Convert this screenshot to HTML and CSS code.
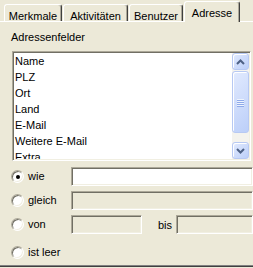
FILE: index.html
```html
<!DOCTYPE html>
<html lang="de">
<head>
<meta charset="UTF-8">
<title>Adresse</title>
<link rel="stylesheet" href="styles.css">
</head>
<body>
  <div class="tabs">
    <div class="tab t1">Merkmale</div>
    <div class="tab t2">Aktivitäten</div>
    <div class="tab t3">Benutzer</div>
    <div class="tab t4 active">Adresse</div>
  </div>
  <div class="panel">
    <div class="caption">Adressenfelder</div>
    <div class="list">
      <div class="items">
        <div class="item">Name</div>
        <div class="item">PLZ</div>
        <div class="item">Ort</div>
        <div class="item">Land</div>
        <div class="item">E-Mail</div>
        <div class="item">Weitere E-Mail</div>
        <div class="item">Extra</div>
      </div>
      <div class="scroll">
        <div class="sbtn">
          <svg width="9" height="6" viewBox="0 0 9 6"><path d="M1 5 L4.5 1.5 L8 5" fill="none" stroke="#4d6185" stroke-width="2"/></svg>
        </div>
        <div class="thumb">
          <div class="grip"></div>
          <div class="grip"></div>
          <div class="grip"></div>
          <div class="grip"></div>
        </div>
        <div class="track"></div>
        <div class="sbtn">
          <svg width="9" height="6" viewBox="0 0 9 6"><path d="M1 1 L4.5 4.5 L8 1" fill="none" stroke="#4d6185" stroke-width="2"/></svg>
        </div>
      </div>
    </div>

    <div class="crit">
      <div class="row">
        <div class="opt"><span class="radio checked"></span>wie</div>
        <input class="field" type="text">
      </div>
      <div class="row">
        <div class="opt"><span class="radio"></span>gleich</div>
        <input class="field off" type="text" disabled>
      </div>
      <div class="row">
        <div class="opt"><span class="radio"></span>von</div>
        <input class="field off short" type="text" disabled>
        <span class="bis">bis</span>
        <input class="field off" type="text" disabled>
      </div>
      <div class="row last">
        <div class="opt"><span class="radio"></span>ist leer</div>
      </div>
    </div>
  </div>
</body>
</html>
```

FILE: styles.css
```css
  body {
    margin: 0;
    width: 253px;
    height: 268px;
    overflow: hidden;
    background-color: #ece9d8;
    font-family: "Liberation Sans", Arial, sans-serif;
    font-size: 11px;
    color: #000;
  }
  .tabs {
    display: flex;
    align-items: flex-end;
    gap: 1px;
    height: 21px;
    padding-left: 4px;
  }
  .tab {
    box-sizing: border-box;
    height: 17px;
    padding-top: 5px;
    line-height: 12px;
    text-align: center;
    border: 1px solid;
    border-bottom: none;
    border-color: #fff #404040 transparent #fff;
    border-radius: 3px 3px 0 0;
    box-shadow: inset -1px 0 #aca899;
    background-color: #ece9d8;
  }
  .t1 { width: 58px; }
  .t2 { width: 65px; }
  .t3 { width: 54px; }
  .t4 { width: 56px; }
  .tab.active {
    height: 21px;
    margin-bottom: -1px;
    position: relative;
    z-index: 1;
  }
  .panel {
    box-sizing: border-box;
    height: 246px;
    padding: 9px 0 0 11px;
    border-top: 1px solid #fff;
    border-bottom: 1px solid #404040;
    box-shadow: inset 0 -1px #808080;
  }
  .caption {
    line-height: 13px;
    margin-bottom: 7px;
  }
  .list {
    box-sizing: border-box;
    display: flex;
    width: 239px;
    height: 110px;
    margin-left: 1px;
    border: 1px solid;
    border-color: #aca899 #fff #fff #aca899;
    box-shadow: inset 1px 1px #716f64, inset -1px -1px #f1efe2;
    padding: 1px;
  }
  .items {
    flex: 1;
    overflow: hidden;
    background-color: #fff;
    padding-left: 1px;
  }
  .item {
    line-height: 16px;
    height: 16px;
    white-space: nowrap;
  }
  .scroll {
    width: 17px;
    display: flex;
    flex-direction: column;
    background-color: #f4f3ee;
  }
  .sbtn, .thumb {
    box-sizing: border-box;
    border: 1px solid #b7c9f3;
    border-radius: 3px;
    background: linear-gradient(135deg, #e1eafe, #bccff9);
    box-shadow: inset 1px 1px #fff;
  }
  .sbtn {
    height: 17px;
    display: flex;
    justify-content: center;
    align-items: center;
  }
  .thumb {
    height: 62px;
    margin-top: 1px;
    display: flex;
    flex-direction: column;
    justify-content: center;
    align-items: center;
    gap: 1px;
  }
  .grip {
    width: 7px;
    height: 1px;
    background-color: #eef4fe;
    box-shadow: 0 1px #8faaea;
  }
  .track {
    flex: 1;
  }
  .crit {
    margin-top: 6px;
    display: flex;
    flex-direction: column;
    gap: 5px;
  }
  .row {
    display: flex;
    align-items: center;
    height: 19px;
  }
  .row.last {
    margin-top: 3px;
    height: 20px;
  }
  .opt {
    width: 60px;
    display: flex;
    align-items: center;
    gap: 4px;
    line-height: 13px;
  }
  .radio {
    box-sizing: border-box;
    width: 13px;
    height: 13px;
    border-radius: 50%;
    border: 1px solid;
    border-color: #aca899 #fff #fff #aca899;
    box-shadow: inset 1px 1px #716f64, inset -1px -1px #f1efe2;
    background-color: #fff;
    display: flex;
    justify-content: center;
    align-items: center;
  }
  .radio.checked::after {
    content: '';
    width: 4px;
    height: 4px;
    border-radius: 50%;
    background-color: #000;
  }
  .field {
    box-sizing: border-box;
    flex: 1;
    min-width: 0;
    height: 19px;
    margin: 0;
    padding: 0 2px;
    border: 1px solid;
    border-color: #aca899 #fff #fff #aca899;
    box-shadow: inset 1px 1px #716f64, inset -1px -1px #f1efe2;
    background-color: #fff;
    font: inherit;
    outline: none;
  }
  .field.off {
    background-color: #ece9d8;
  }
  .field.short {
    flex: none;
    width: 71px;
  }
  .bis {
    margin: 0 4px 0 16px;
  }
```
